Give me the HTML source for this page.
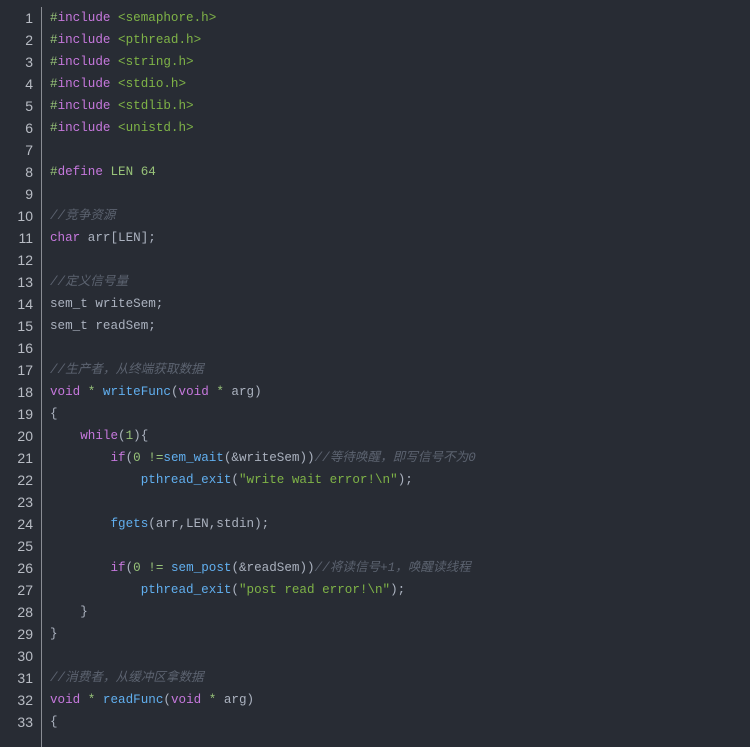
<!DOCTYPE html><html><head><style>
body{margin:0;background:#282c34;width:750px;height:735px;overflow:hidden}
.c{position:absolute;left:0;top:7px;font-family:"Liberation Mono","Noto Sans CJK SC",monospace;font-size:12.6px;line-height:22px;color:#abb2bf;white-space:pre}
.n{position:absolute;left:0;width:33px;text-align:right;color:#b8bcc4;font-family:"Liberation Sans",sans-serif;font-size:14px}
.bar{position:absolute;left:41px;top:7px;width:1px;height:740px;background:#8a8d94}
.l{position:absolute;left:50px}
.k{color:#c678dd}.g{color:#98c379}.s{color:#7fb347}.m{color:#5c6370;font-style:italic}.f{color:#61afef}.o{color:#98c379}.h{color:#98c379}
</style></head><body>
<div class="bar"></div>
<div class="c" id="c"></div>
<script>
var L=[
'<span class="h">#</span><span class="k">include</span> <span class="s">&lt;semaphore.h&gt;</span>',
'<span class="h">#</span><span class="k">include</span> <span class="s">&lt;pthread.h&gt;</span>',
'<span class="h">#</span><span class="k">include</span> <span class="s">&lt;string.h&gt;</span>',
'<span class="h">#</span><span class="k">include</span> <span class="s">&lt;stdio.h&gt;</span>',
'<span class="h">#</span><span class="k">include</span> <span class="s">&lt;stdlib.h&gt;</span>',
'<span class="h">#</span><span class="k">include</span> <span class="s">&lt;unistd.h&gt;</span>',
'',
'<span class="h">#</span><span class="k">define</span> <span class="g">LEN 64</span>',
'',
'<span class="m">//竞争资源</span>',
'<span class="k">char</span> arr[LEN];',
'',
'<span class="m">//定义信号量</span>',
'sem_t writeSem;',
'sem_t readSem;',
'',
'<span class="m">//生产者，从终端获取数据</span>',
'<span class="k">void</span> <span class="g">*</span> <span class="f">writeFunc</span>(<span class="k">void</span> <span class="g">*</span> arg)',
'{',
'    <span class="k">while</span>(<span class="g">1</span>){',
'        <span class="k">if</span>(<span class="g">0</span> <span class="o">!=</span><span class="f">sem_wait</span>(&amp;writeSem))<span class="m">//等待唤醒，即写信号不为0</span>',
'            <span class="f">pthread_exit</span>(<span class="s">"write wait error!\\n"</span>);',
'',
'        <span class="f">fgets</span>(arr,LEN,stdin);',
'',
'        <span class="k">if</span>(<span class="g">0</span> <span class="o">!=</span> <span class="f">sem_post</span>(&amp;readSem))<span class="m">//将读信号+1，唤醒读线程</span>',
'            <span class="f">pthread_exit</span>(<span class="s">"post read error!\\n"</span>);',
'    }',
'}',
'',
'<span class="m">//消费者，从缓冲区拿数据</span>',
'<span class="k">void</span> <span class="g">*</span> <span class="f">readFunc</span>(<span class="k">void</span> <span class="g">*</span> arg)',
'{'];
var h='';
for(var i=0;i<L.length;i++){h+='<div class="n" style="top:'+(i*22)+'px">'+(i+1)+'</div><div class="l" style="top:'+(i*22)+'px">'+L[i]+'</div>';}
document.getElementById('c').innerHTML=h;
</script>
</body></html>
